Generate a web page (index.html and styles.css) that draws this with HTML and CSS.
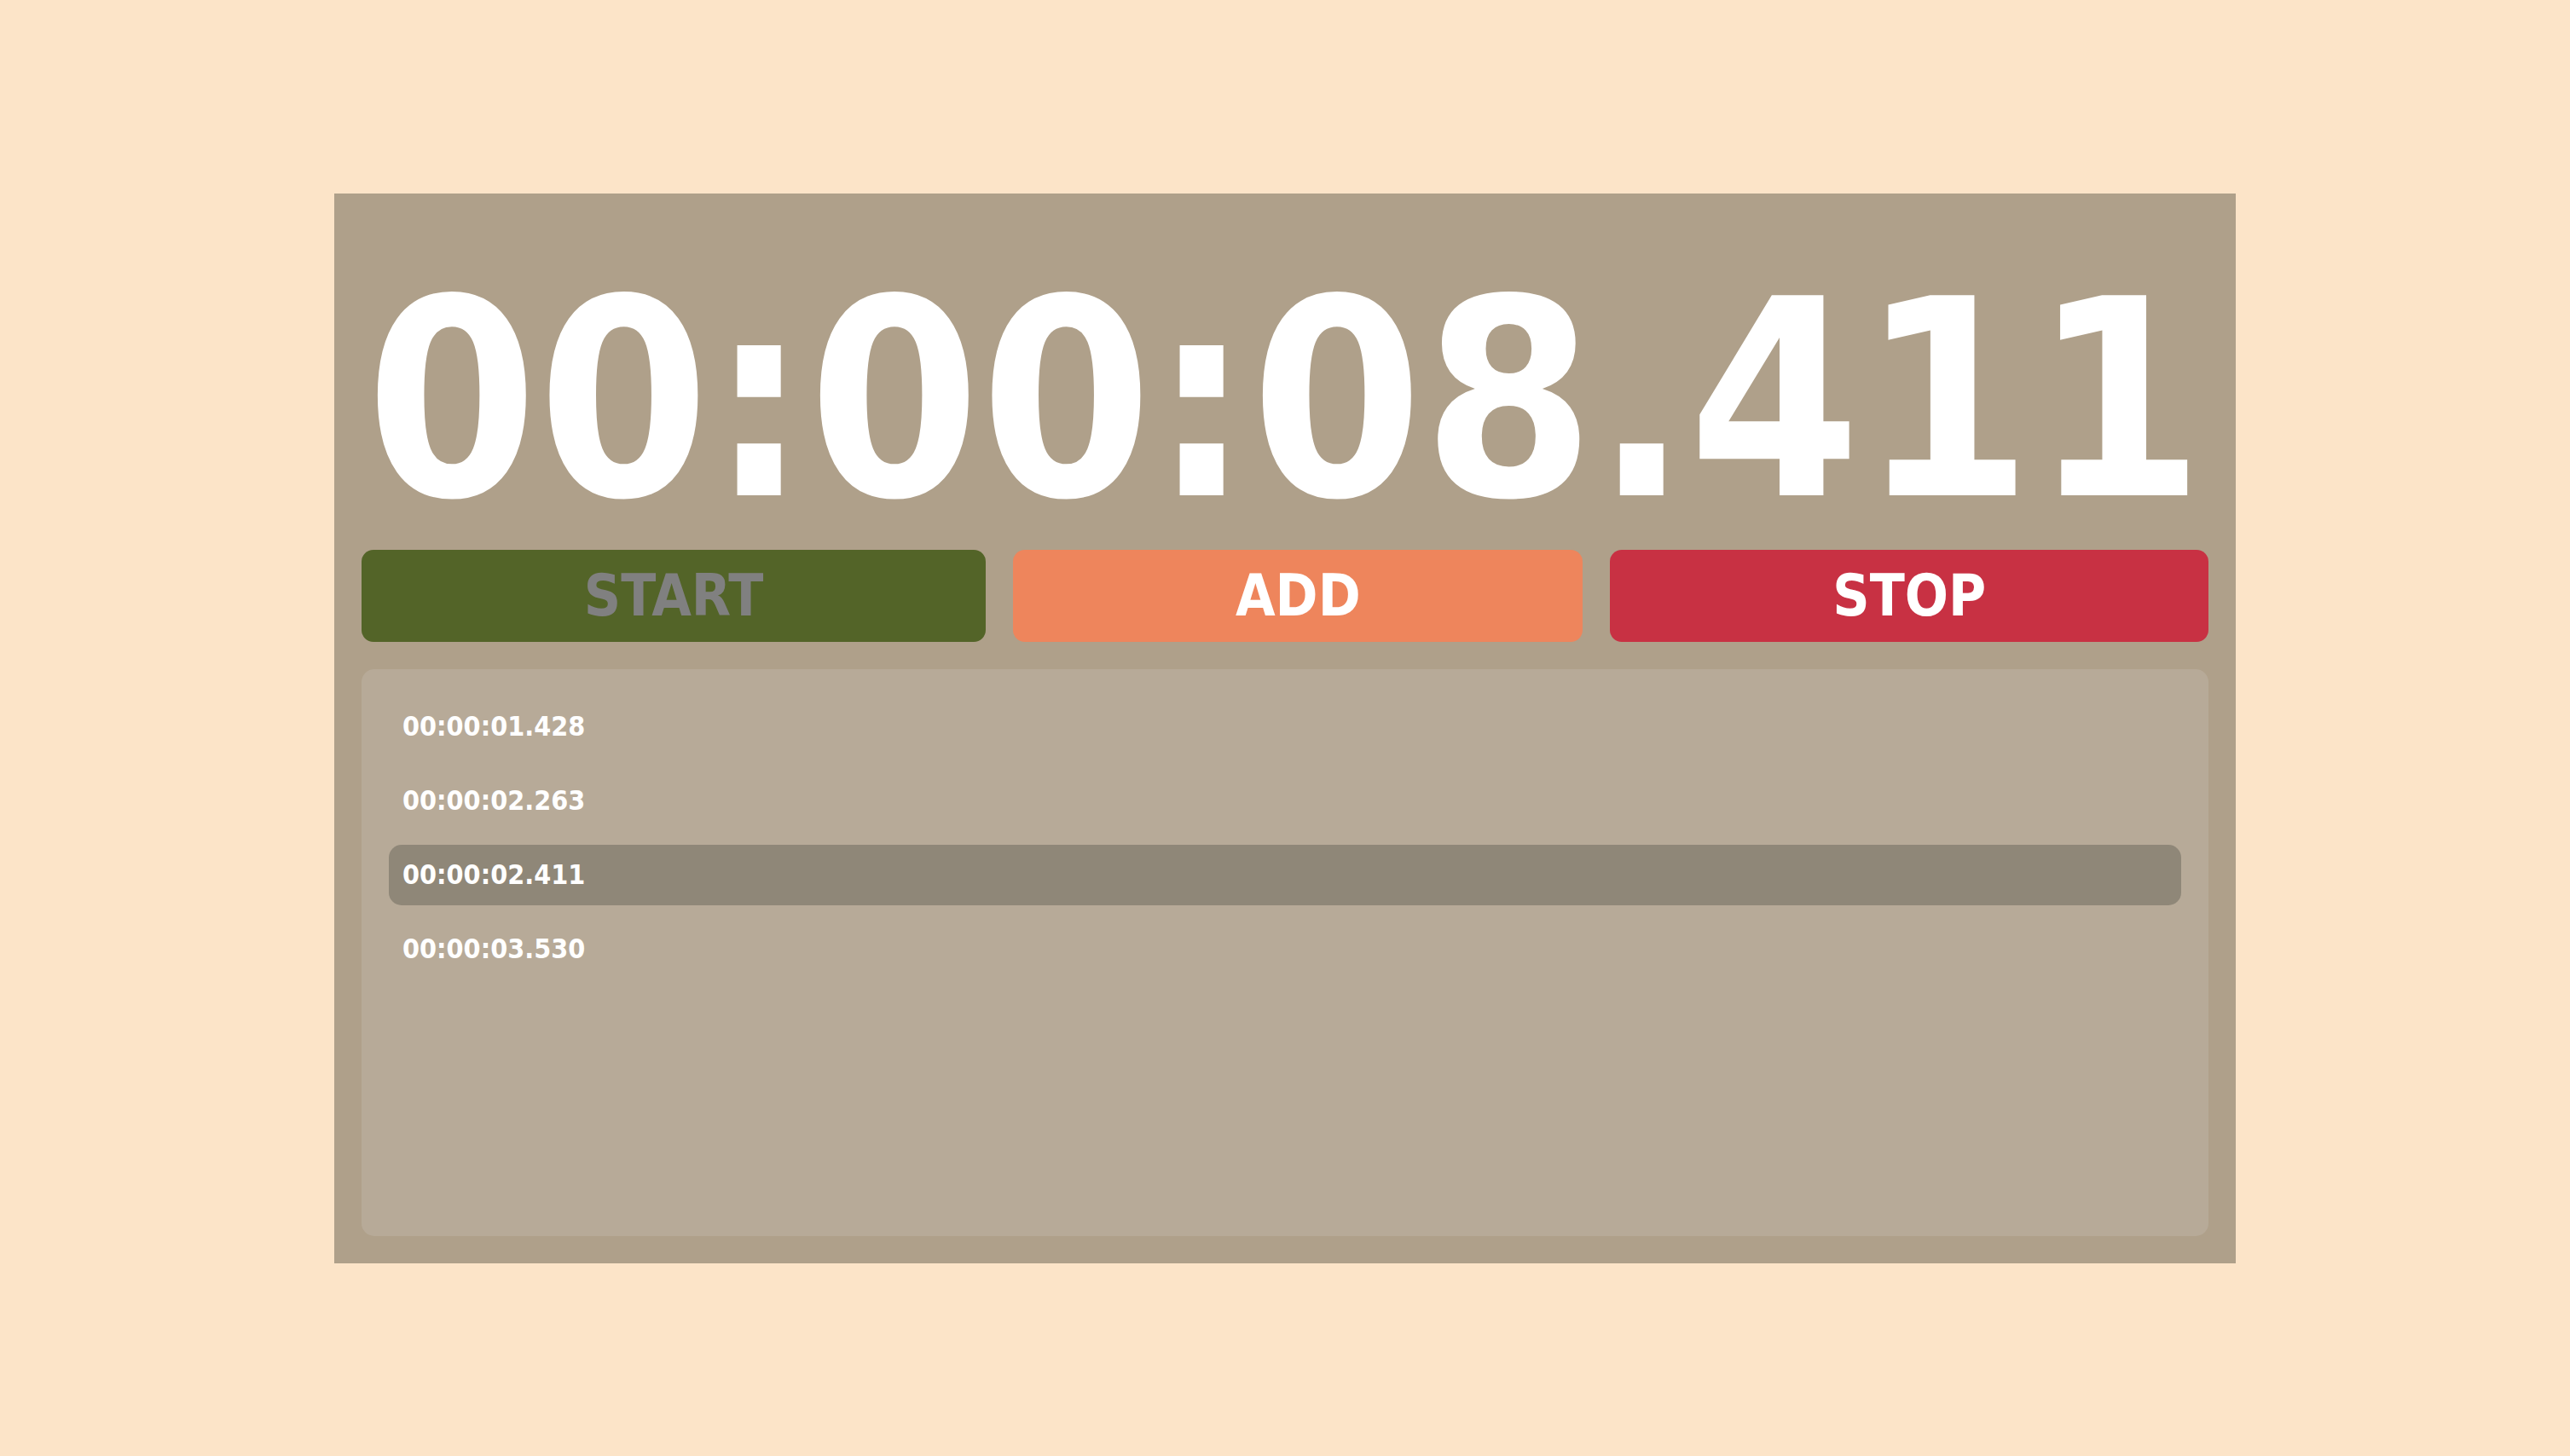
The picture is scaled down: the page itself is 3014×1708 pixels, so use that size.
FILE: index.html
```html
<!DOCTYPE html>
<html lang="en">
<head>
<meta charset="utf-8">
<title>Stopwatch</title>
<link rel="stylesheet" href="styles.css">
</head>
<body>
<main class="stopwatch">
  <div class="clock">00:00:08.411</div>
  <div class="controls">
    <button class="btn btn-start">START</button>
    <button class="btn btn-add">ADD</button>
    <button class="btn btn-stop">STOP</button>
  </div>
  <ul class="laps">
    <li class="lap">00:00:01.428</li>
    <li class="lap">00:00:02.263</li>
    <li class="lap lap-active">00:00:02.411</li>
    <li class="lap">00:00:03.530</li>
  </ul>
</main>
</body>
</html>
```

FILE: styles.css
```css
html, body {
  margin: 0;
  padding: 0;
}
body {
  background: #fce4c8;
  width: 3014px;
  height: 1708px;
  display: flex;
  align-items: center;
  justify-content: center;
  font-family: "DejaVu Sans Condensed", "DejaVu Sans", sans-serif;
  font-weight: bold;
  color: #ffffff;
}
.stopwatch {
  box-sizing: border-box;
  width: 2230px;
  height: 1255px;
  background: #afa08a;
  padding: 82px 32px 32px 32px;
  display: flex;
  flex-direction: column;
}
.clock {
  font-size: 322px;
  line-height: 1;
  text-align: center;
  margin-bottom: 14px;
  white-space: nowrap;
}
.controls {
  display: flex;
  gap: 32px;
  height: 108px;
  margin-bottom: 32px;
}
.btn {
  flex: 1 1 auto;
  border: none;
  border-radius: 14px;
  padding: 0;
  font-family: inherit;
  font-weight: bold;
  font-size: 67px;
  color: #ffffff;
  cursor: pointer;
}
.btn-start {
  background: #536428;
  color: #808080;
}
.btn-add {
  background: #ee855c;
}
.btn-stop {
  background: #c83143;
}
.laps {
  flex: 1;
  list-style: none;
  margin: 0;
  padding: 32px;
  background: #b7aa98;
  border-radius: 15px;
  display: flex;
  flex-direction: column;
  gap: 16px;
}
.lap {
  height: 71px;
  line-height: 71px;
  padding: 0 16px;
  font-size: 32px;
  border-radius: 15px;
}
.lap-active {
  background: #8f8778;
}
```
